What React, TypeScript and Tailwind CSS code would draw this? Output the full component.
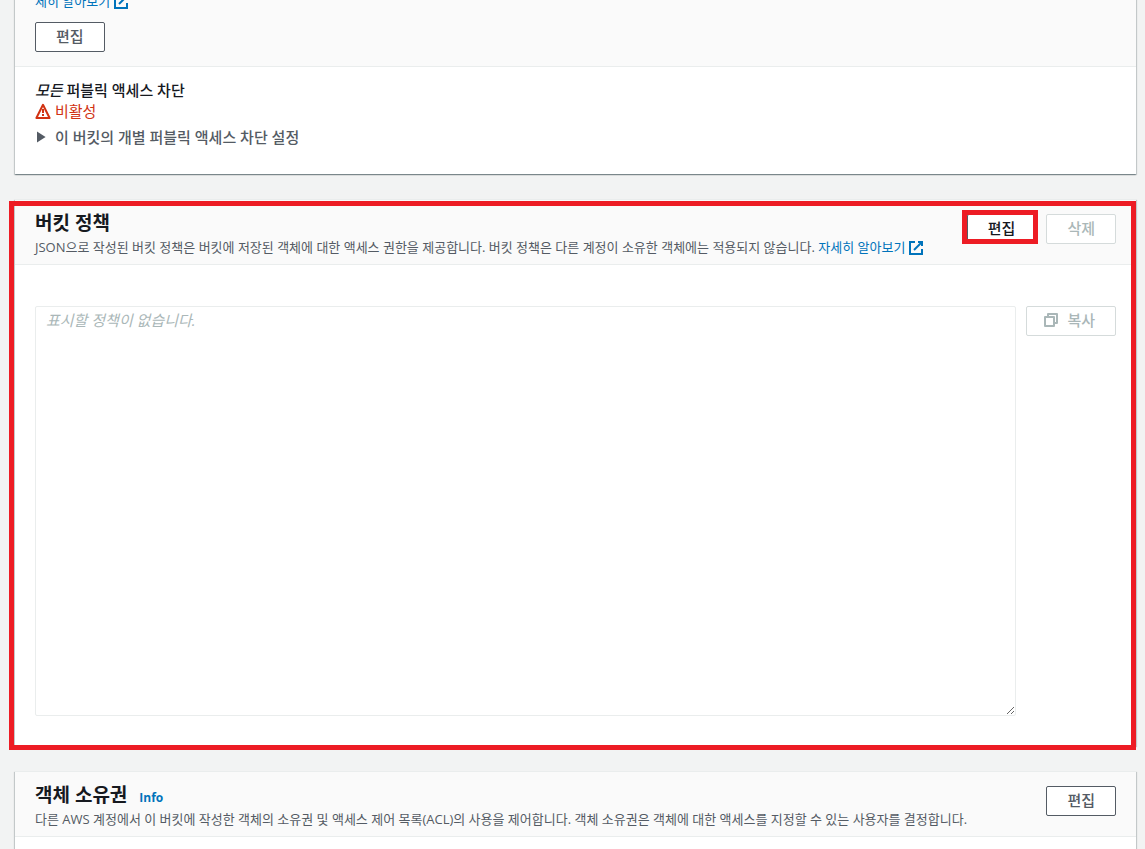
import type { ReactNode } from "react";

function ExternalIcon() {
  return (
    <svg
      viewBox="0 0 16 16"
      className="inline-block h-4 w-4 shrink-0 fill-none stroke-current stroke-2"
      aria-hidden="true"
    >
      <path d="M10 2h4v4" />
      <path d="M6 10l8-8" />
      <path d="M14 9.048V14H2V2h5" />
    </svg>
  );
}

function WarningIcon() {
  return (
    <svg viewBox="0 0 16 16" className="h-4 w-4 fill-none stroke-current stroke-2" aria-hidden="true">
      <path d="M8 1.8l6.6 13.2H1.4L8 1.8z" strokeLinejoin="round" />
      <path d="M8 6v4" />
      <path d="M8 11v2" />
    </svg>
  );
}

function CopyIcon() {
  return (
    <svg viewBox="0 0 16 16" className="h-4 w-4 fill-none stroke-current stroke-2" aria-hidden="true">
      <path d="M2 5h9v9H2z" strokeLinejoin="round" />
      <path d="M5 5V2h9v9h-3" strokeLinejoin="round" />
    </svg>
  );
}

function Button({
  children,
  icon,
  active,
  disabled,
}: {
  children: ReactNode;
  icon?: ReactNode;
  active?: boolean;
  disabled?: boolean;
}) {
  const padding = icon ? "pl-4 pr-5" : "px-5";
  const color = active ? "text-[#16191f]" : "text-[#545b64]";

  return (
    <button
      type="button"
      disabled={disabled}
      className={`flex h-[30px] shrink-0 items-center gap-2 rounded-[2px] border border-[#545b64] bg-white pb-0.5 text-[15px] font-medium disabled:border-[#d5dbdb] disabled:text-[#aab7b8] ${padding} ${color}`}
    >
      {icon}
      {children}
    </button>
  );
}

function Panel({ children }: { children: ReactNode }) {
  return (
    <section className="border-t border-[#eaeded] bg-white shadow-[0_1px_1px_0_rgba(0,28,36,0.3),1px_1px_1px_0_rgba(0,28,36,0.15),-1px_1px_1px_0_rgba(0,28,36,0.15)]">
      {children}
    </section>
  );
}

function PanelHeader({
  title,
  info,
  description,
  actions,
}: {
  title: string;
  info?: string;
  description: ReactNode;
  actions: ReactNode;
}) {
  return (
    <header className="flex items-start justify-between gap-4 border-b border-[#eaeded] bg-[#fafafa] px-5 pb-1.5">
      <div className="pt-[9px]">
        <h2 className="flex items-baseline gap-3 text-[19px] leading-7 font-bold text-[#16191f]">
          {title}
          {info && (
            <a href="#info" className="text-xs text-[#0073bb]">
              {info}
            </a>
          )}
        </h2>
        <p className="text-[13px] leading-[21px] text-[#545b64]">{description}</p>
      </div>
      <div className="flex gap-2.5 pt-3.5">{actions}</div>
    </header>
  );
}

export default function App() {
  return (
    <div className="h-screen overflow-hidden bg-[#f2f3f3] font-['Open_Sans','Noto_Sans_CJK_KR',sans-serif] text-[#16191f]">
      <main className="-mt-2.5 flex flex-col gap-[25px] pr-[9px] pl-[15px]">
        <Panel>
          <header className="border-b border-[#eaeded] bg-[#fafafa] px-5 pb-3.5">
            <a href="#learn-more" className="mb-2.5 flex h-[21px] items-center gap-[3px] text-[13px] text-[#0073bb]">
              세히 알아보기
              <ExternalIcon />
            </a>
            <Button>편집</Button>
          </header>
          <div className="flex h-[107px] flex-col px-5 pt-[13px]">
            <h3 className="text-[15px] leading-[21px] font-medium">
              <em>모든</em> 퍼블릭 액세스 차단
            </h3>
            <p className="flex items-center gap-1 text-[15px] leading-5 text-[#d13212]">
              <WarningIcon />
              비활성
            </p>
            <button type="button" className="mt-1 flex items-center gap-2 text-[15px] leading-6 font-medium text-[#545b64]">
              <svg viewBox="0 0 12 12" className="h-3 w-3 fill-current" aria-hidden="true">
                <path d="M2 .6v10.8L10.6 6z" />
              </svg>
              이 버킷의 개별 퍼블릭 액세스 차단 설정
            </button>
          </div>
        </Panel>

        <div className="relative">
          <Panel>
            <PanelHeader
              title="버킷 정책"
              description={
                <>
                  JSON으로 작성된 버킷 정책은 버킷에 저장된 객체에 대한 액세스 권한을 제공합니다. 버킷 정책은 다른 계정이
                  소유한 객체에는 적용되지 않습니다.{" "}
                  <a href="#policy-docs" className="inline-flex items-center gap-[3px] text-[#0073bb]">
                    자세히 알아보기
                    <ExternalIcon />
                  </a>
                </>
              }
              actions={
                <>
                  <div className="relative">
                    <Button active>편집</Button>
                    <span className="pointer-events-none absolute -top-1 -right-0.5 bottom-0 -left-[5px] border-[5px] border-[#ed1c24]" />
                  </div>
                  <Button disabled>삭제</Button>
                </>
              }
            />
            <div className="flex items-start gap-2.5 px-5 pt-[41px] pb-[30px]">
              <textarea
                aria-label="버킷 정책"
                readOnly
                placeholder="표시할 정책이 없습니다."
                className="h-[410px] min-w-0 flex-1 resize rounded-[2px] border border-[#eaeded] bg-white px-2.5 py-[3px] text-[15px] leading-5 placeholder:text-[#aab7b8] placeholder:italic"
              />
              <Button disabled icon={<CopyIcon />}>
                복사
              </Button>
            </div>
          </Panel>
          <span className="pointer-events-none absolute top-0.5 right-0 -bottom-1 -left-1.5 border-[5px] border-[#ed1c24]" />
        </div>

        <Panel>
          <PanelHeader
            title="객체 소유권"
            info="Info"
            description="다른 AWS 계정에서 이 버킷에 작성한 객체의 소유권 및 액세스 제어 목록(ACL)의 사용을 제어합니다. 객체 소유권은 객체에 대한 액세스를 지정할 수 있는 사용자를 결정합니다."
            actions={<Button>편집</Button>}
          />
          <div className="h-40" />
        </Panel>
      </main>
    </div>
  );
}
